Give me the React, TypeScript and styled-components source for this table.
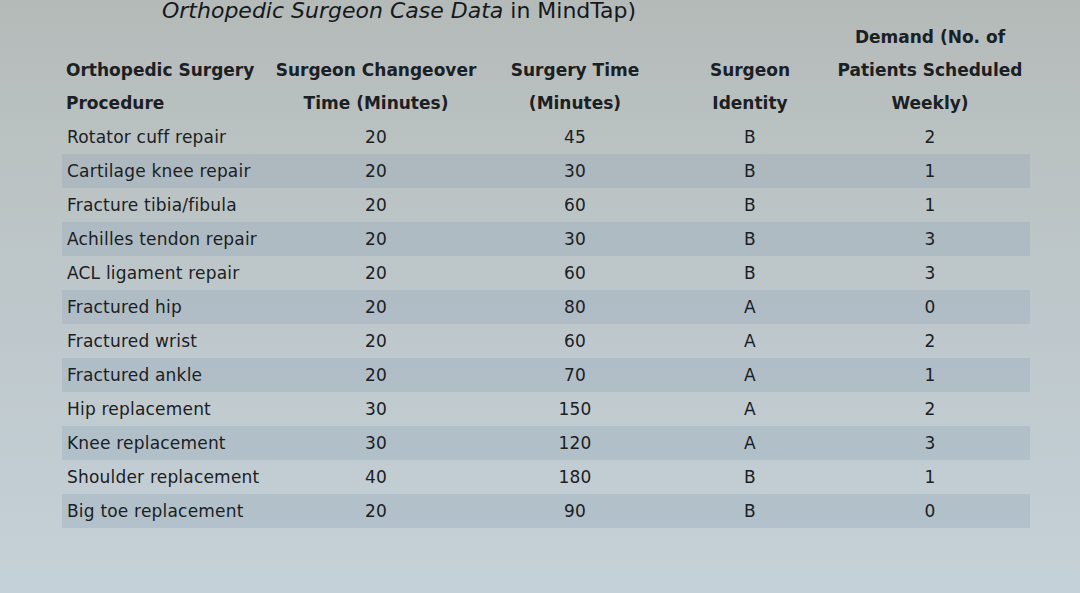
import React from 'react';
import styled, { createGlobalStyle } from 'styled-components';

const GlobalStyle = createGlobalStyle`
    html, body {
        margin: 0;
        padding: 0;
        height: 100%;
    }
    body {
        font-family: "DejaVu Sans", "Liberation Sans", sans-serif;
        color: #1b2024;
        overflow: hidden;
    }
`

const Screen = styled.div`
    width: 1080px;
    height: 593px;
    overflow: hidden;
    background: linear-gradient(180deg, #b4bab8 0%, #bac2c2 25%, #bec8cc 55%, #c5d1d8 100%);
    padding-left: 62px;
    box-sizing: border-box;
`

const Title = styled.h1`
    margin: -5px 0 0 100px;
    font-family: "DejaVu Sans", sans-serif;
    font-weight: normal;
    font-size: 22px;
    line-height: 32px;
    color: #15191c;
    em {
        font-style: italic;
    }
`

const Table = styled.div`
    width: 968px;
    margin-top: -6px;
    display: grid;
    grid-template-columns: 210px 208px 190px 160px 200px;
`

const HeadCell = styled.div<{ $align?: string }>`
    display: flex;
    align-items: flex-end;
    justify-content: ${p => p.$align === 'left' ? 'flex-start' : 'center'};
    text-align: ${p => p.$align === 'left' ? 'left' : 'center'};
    padding-left: ${p => p.$align === 'left' ? '4px' : '0'};
    font-weight: bold;
    font-size: 17px;
    line-height: 33px;
`

const Row = styled.div<{ $shade: boolean }>`
    display: contents;
    & > div {
        background: ${p => p.$shade ? 'rgba(150, 170, 185, 0.36)' : 'transparent'};
    }
`

const Cell = styled.div<{ $align?: string }>`
    height: 34px;
    display: flex;
    align-items: center;
    justify-content: ${p => p.$align === 'left' ? 'flex-start' : 'center'};
    padding-left: ${p => p.$align === 'left' ? '5px' : '0'};
    font-size: 17px;
    letter-spacing: 0.2px;
`

const rows: [string, number, number, string, number][] = [
    ['Rotator cuff repair', 20, 45, 'B', 2],
    ['Cartilage knee repair', 20, 30, 'B', 1],
    ['Fracture tibia/fibula', 20, 60, 'B', 1],
    ['Achilles tendon repair', 20, 30, 'B', 3],
    ['ACL ligament repair', 20, 60, 'B', 3],
    ['Fractured hip', 20, 80, 'A', 0],
    ['Fractured wrist', 20, 60, 'A', 2],
    ['Fractured ankle', 20, 70, 'A', 1],
    ['Hip replacement', 30, 150, 'A', 2],
    ['Knee replacement', 30, 120, 'A', 3],
    ['Shoulder replacement', 40, 180, 'B', 1],
    ['Big toe replacement', 20, 90, 'B', 0],
];

export default function App() {
    return (
        <Screen>
            <GlobalStyle />
            <Title><em>Orthopedic Surgeon Case Data</em> in MindTap)</Title>
            <Table>
                <HeadCell $align="left">Orthopedic Surgery<br />Procedure</HeadCell>
                <HeadCell>Surgeon Changeover<br />Time (Minutes)</HeadCell>
                <HeadCell>Surgery Time<br />(Minutes)</HeadCell>
                <HeadCell>Surgeon<br />Identity</HeadCell>
                <HeadCell>Demand (No. of<br />Patients Scheduled<br />Weekly)</HeadCell>
                {rows.map((r, i) => (
                    <Row key={r[0]} $shade={i % 2 === 1}>
                        <Cell $align="left">{r[0]}</Cell>
                        <Cell>{r[1]}</Cell>
                        <Cell>{r[2]}</Cell>
                        <Cell>{r[3]}</Cell>
                        <Cell>{r[4]}</Cell>
                    </Row>
                ))}
            </Table>
        </Screen>
    )
}
